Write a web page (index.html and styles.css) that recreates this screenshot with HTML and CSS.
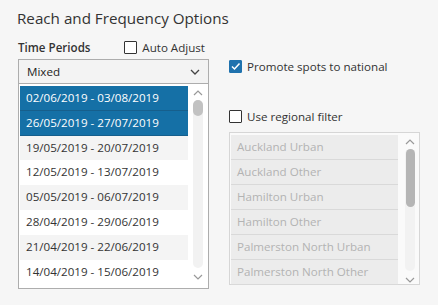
FILE: index.html
```html
<!DOCTYPE html>
<html>
<head>
<meta charset="utf-8">
<link rel="stylesheet" href="styles.css">
</head>
<body>
<div class="page">
  <h1 class="title">Reach and Frequency Options</h1>
  <div class="cols">
    <div class="left">
      <div class="head">
        <span class="label">Time Periods</span>
        <label class="check auto"><span class="box"></span><span>Auto Adjust</span></label>
      </div>
      <div class="combo">
        <span>Mixed</span>
        <svg class="chev" width="10" height="6" viewBox="0 0 10 6"><path d="M1 1 L5 5 L9 1" fill="none" stroke="#444" stroke-width="1.3"/></svg>
      </div>
      <div class="list">
        <div class="rows">
          <div class="row sel">02/06/2019 - 03/08/2019</div>
          <div class="row sel">26/05/2019 - 27/07/2019</div>
          <div class="row alt">19/05/2019 - 20/07/2019</div>
          <div class="row">12/05/2019 - 13/07/2019</div>
          <div class="row alt">05/05/2019 - 06/07/2019</div>
          <div class="row">28/04/2019 - 29/06/2019</div>
          <div class="row alt">21/04/2019 - 22/06/2019</div>
          <div class="row">14/04/2019 - 15/06/2019</div>
        </div>
        <div class="sbar">
          <svg class="arr" width="10" height="6" viewBox="0 0 10 6"><path d="M1 5 L5 1 L9 5" fill="none" stroke="#999" stroke-width="1.2"/></svg>
          <div class="track"><div class="thumb"></div></div>
          <svg class="arr" width="10" height="6" viewBox="0 0 10 6"><path d="M1 1 L5 5 L9 1" fill="none" stroke="#999" stroke-width="1.2"/></svg>
        </div>
      </div>
    </div>
    <div class="right">
      <label class="check promote"><span class="box on"><svg width="11" height="11" viewBox="0 0 11 11"><path d="M2 5.5 L4.5 8 L9.5 2.5" fill="none" stroke="#fff" stroke-width="1.5"/></svg></span><span>Promote spots to national</span></label>
      <label class="check regional"><span class="box"></span><span>Use regional filter</span></label>
      <div class="list dis">
        <div class="rows">
          <div class="row">Auckland Urban</div>
          <div class="row">Auckland Other</div>
          <div class="row">Hamilton Urban</div>
          <div class="row">Hamilton Other</div>
          <div class="row">Palmerston North Urban</div>
          <div class="row">Palmerston North Other</div>
        </div>
        <div class="sbar">
          <svg class="arr" width="10" height="6" viewBox="0 0 10 6"><path d="M1 5 L5 1 L9 5" fill="none" stroke="#999" stroke-width="1.2"/></svg>
          <div class="track"><div class="thumb"></div></div>
          <svg class="arr" width="10" height="6" viewBox="0 0 10 6"><path d="M1 1 L5 5 L9 1" fill="none" stroke="#999" stroke-width="1.2"/></svg>
        </div>
      </div>
    </div>
  </div>
</div>
</body>
</html>
```
FILE: styles.css
```css
* { box-sizing: border-box; }
html, body { margin: 0; padding: 0; }
body {
  background: #f6f6f6;
  font-family: "Open Sans", "Noto Sans", sans-serif;
  font-size: 11.6px;
  color: #222;
  width: 438px;
  height: 305px;
  overflow: hidden;
}
.page { padding: 7px 0 0 17px; }
.title {
  margin: 0;
  font-size: 15.2px;
  font-weight: 400;
  line-height: 22px;
  color: #333;
}
.cols { display: flex; margin-top: 9px; }
.left { width: 191px; margin-left: 1px; }
.head {
  display: flex;
  align-items: center;
  height: 19px;
}
.label { font-weight: 600; color: #333; }
.check {
  display: flex;
  align-items: center;
  gap: 5px;
  color: #333;
}
.check.auto { margin-left: auto; margin-right: 4px; }
.box {
  width: 13px;
  height: 13px;
  border: 1px solid #333;
  border-radius: 1px;
  background: #fff;
  display: flex;
  align-items: center;
  justify-content: center;
}
.box.on { background: #1f72ae; border-color: #1f72ae; }
.combo {
  margin-top: 2px;
  height: 25px;
  border: 1px solid #adadad;
  background: #f3f3f3;
  display: flex;
  align-items: center;
  justify-content: space-between;
  padding: 0 8px 0 8px;
}
.list {
  border: 1px solid #adadad;
  border-top: none;
  background: #fff;
  height: 205px;
  display: flex;
  padding: 2px 0 0 1px;
}
.rows { width: 168px; }
.row {
  height: 24.8px;
  line-height: 24px;
  padding-left: 6px;
  white-space: nowrap;
  color: #333;
}
.row.alt { background: #f4f4f4; }
.row.sel { background: #1570a6; color: #fff; border-bottom: 1px solid #165f8c; }
.sbar {
  width: 10px;
  margin-left: 5px;
  display: flex;
  flex-direction: column;
  align-items: center;
  padding-top: 4px;
}
.arr { flex: none; }
.track {
  width: 10px;
  flex: 0 0 168px;
  margin: 4px 0 6px;
  background: #f2f2f2;
  border-radius: 5px;
}
.thumb {
  width: 10px;
  height: 16px;
  background: #c2c2c2;
  border-radius: 5px;
}
.right { margin-left: 20px; width: 191px; }
.promote { margin-top: 22px; height: 13px; }
.regional { margin-top: 37px; height: 13px; }
.list.dis {
  margin-top: 9px;
  border: 1px solid #d6d6d6;
  height: 153px;
  background: #fafafa;
}
.list.dis .rows { width: 167px; }
.list.dis .row {
  background: #ececec;
  color: #b3b3b3;
  border-bottom: 1px solid #d9d9d9;
  height: 25px;
}
.list.dis .sbar { margin-left: 7px; }
.list.dis .track { flex: 0 0 122px; }
.list.dis .thumb { height: 58px; background: #b5b5b5; width: 9px; margin: 0 auto; }
```
